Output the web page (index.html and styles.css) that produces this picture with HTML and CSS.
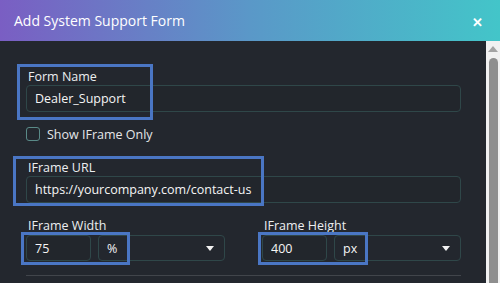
FILE: index.html
```html
<!DOCTYPE html>
<html lang="en">

<head>
    <meta charset="UTF-8">
    <meta name="viewport" content="width=device-width, initial-scale=1.0">
    <title>Add System Support Form</title>
    <link rel="stylesheet" href="styles.css">
</head>

<body>

    <div class="modal">
        <div class="modal-header">
            <h2>Add System Support Form</h2>
            <span class="close">&#10005;</span>
        </div>

        <div class="modal-body">
            <div class="content">
                <label for="formName">Form Name</label>
                <input type="text" id="formName" value="Dealer_Support">

                <div class="check-row">
                    <span class="checkbox"></span>
                    <span>Show IFrame Only</span>
                </div>

                <label for="iframeUrl" class="url-label">IFrame URL</label>
                <input type="text" id="iframeUrl" value="https://yourcompany.com/contact-us">

                <div class="size-row">
                    <div class="size-col">
                        <label for="iframeWidth">IFrame Width</label>
                        <div class="size-inputs">
                            <input type="text" id="iframeWidth" value="75">
                            <div class="unit-select"><span>%</span><span class="caret"></span></div>
                        </div>
                    </div>
                    <div class="size-col">
                        <label for="iframeHeight">IFrame Height</label>
                        <div class="size-inputs">
                            <input type="text" id="iframeHeight" value="400">
                            <div class="unit-select"><span>px</span><span class="caret"></span></div>
                        </div>
                    </div>
                </div>

                <div class="divider"></div>

                <!-- highlight boxes -->
                <div class="mark mark-name"></div>
                <div class="mark mark-url"></div>
                <div class="mark mark-width"></div>
                <div class="mark mark-height"></div>
            </div>

            <div class="scrollbar">
                <span class="arrow-up"></span>
                <span class="thumb"></span>
            </div>
        </div>
    </div>

</body>

</html>
```

FILE: styles.css
```css
body {
    font-family: "Open Sans", "Noto Sans", Arial, sans-serif;
    margin: 0;
    background-color: #23272e;
    overflow: hidden;
}

.modal {
    width: 500px;
    height: 283px;
    display: flex;
    flex-direction: column;
}

.modal-header {
    height: 41px;
    flex-shrink: 0;
    display: flex;
    align-items: center;
    justify-content: space-between;
    padding: 0 17px 0 14px;
    background: linear-gradient(90deg, #7a5ec3 0%, #5a98c8 50%, #43c5c9 100%);
    box-sizing: border-box;
}

.modal-header h2 {
    margin: 0;
    font-size: 14px;
    font-weight: 500;
    color: #fff;
}

.close {
    color: #fff;
    font-size: 13px;
    font-weight: bold;
    margin-top: 3px;
}

.modal-body {
    flex: 1;
    display: flex;
    min-height: 0;
}

.content {
    flex: 1;
    position: relative;
    padding: 27px 25px 0 26px;
    color: #e2e4e6;
    font-size: 12.5px;
}

label {
    display: block;
    line-height: 17px;
    height: 17px;
    padding-left: 2px;
    color: #eceef0;
}

input {
    display: block;
    width: 100%;
    height: 27px;
    box-sizing: border-box;
    padding: 0 8px;
    background-color: #22262c;
    border: 1px solid #2f4749;
    border-radius: 4px;
    color: #f5f5f5;
    font-family: inherit;
    font-size: 12.5px;
    outline: none;
}

.check-row {
    display: flex;
    align-items: center;
    gap: 7px;
    margin-top: 15px;
    height: 14px;
    color: #e4e6e8;
}

.checkbox {
    width: 14px;
    height: 14px;
    box-sizing: border-box;
    border: 1px solid #5a8a88;
    border-radius: 3px;
}

.url-label {
    margin-top: 18px;
}

.size-row {
    display: flex;
    gap: 37px;
    margin-top: 14px;
}

.size-col {
    flex: 1;
}

.size-col label {
    margin-bottom: 1px;
}

.size-inputs {
    display: flex;
    gap: 7px;
}

.size-inputs input {
    width: 65px;
    height: 26px;
    flex-shrink: 0;
}

.unit-select {
    flex: 1;
    height: 26px;
    box-sizing: border-box;
    display: flex;
    align-items: center;
    justify-content: space-between;
    padding: 0 10px 0 8px;
    border: 1px solid #2f4749;
    border-radius: 4px;
    color: #f5f5f5;
}

.caret {
    width: 0;
    height: 0;
    border-left: 4px solid transparent;
    border-right: 4px solid transparent;
    border-top: 5px solid #f2f2f2;
}

.divider {
    height: 1px;
    background-color: #41454b;
    margin-top: 14px;
}

.mark {
    position: absolute;
    border: 3px solid #4a76c4;
    box-sizing: border-box;
}

.mark-name {
    left: 17px;
    top: 23px;
    width: 136px;
    height: 56px;
}

.mark-url {
    left: 13px;
    top: 115px;
    width: 251px;
    height: 50px;
}

.mark-width {
    left: 21px;
    top: 191px;
    width: 109px;
    height: 33px;
}

.mark-height {
    left: 258px;
    top: 191px;
    width: 110px;
    height: 33px;
}

.scrollbar {
    width: 14px;
    flex-shrink: 0;
    background-color: #f1f1f1;
    display: flex;
    flex-direction: column;
    align-items: center;
    padding-top: 5px;
    box-sizing: border-box;
}

.arrow-up {
    width: 0;
    height: 0;
    border-left: 5px solid transparent;
    border-right: 5px solid transparent;
    border-bottom: 6px solid #a3a3a3;
}

.thumb {
    flex: 1;
    width: 9px;
    margin-top: 6px;
    background-color: #8e8e8e;
    border-radius: 5px 5px 0 0;
}
```
